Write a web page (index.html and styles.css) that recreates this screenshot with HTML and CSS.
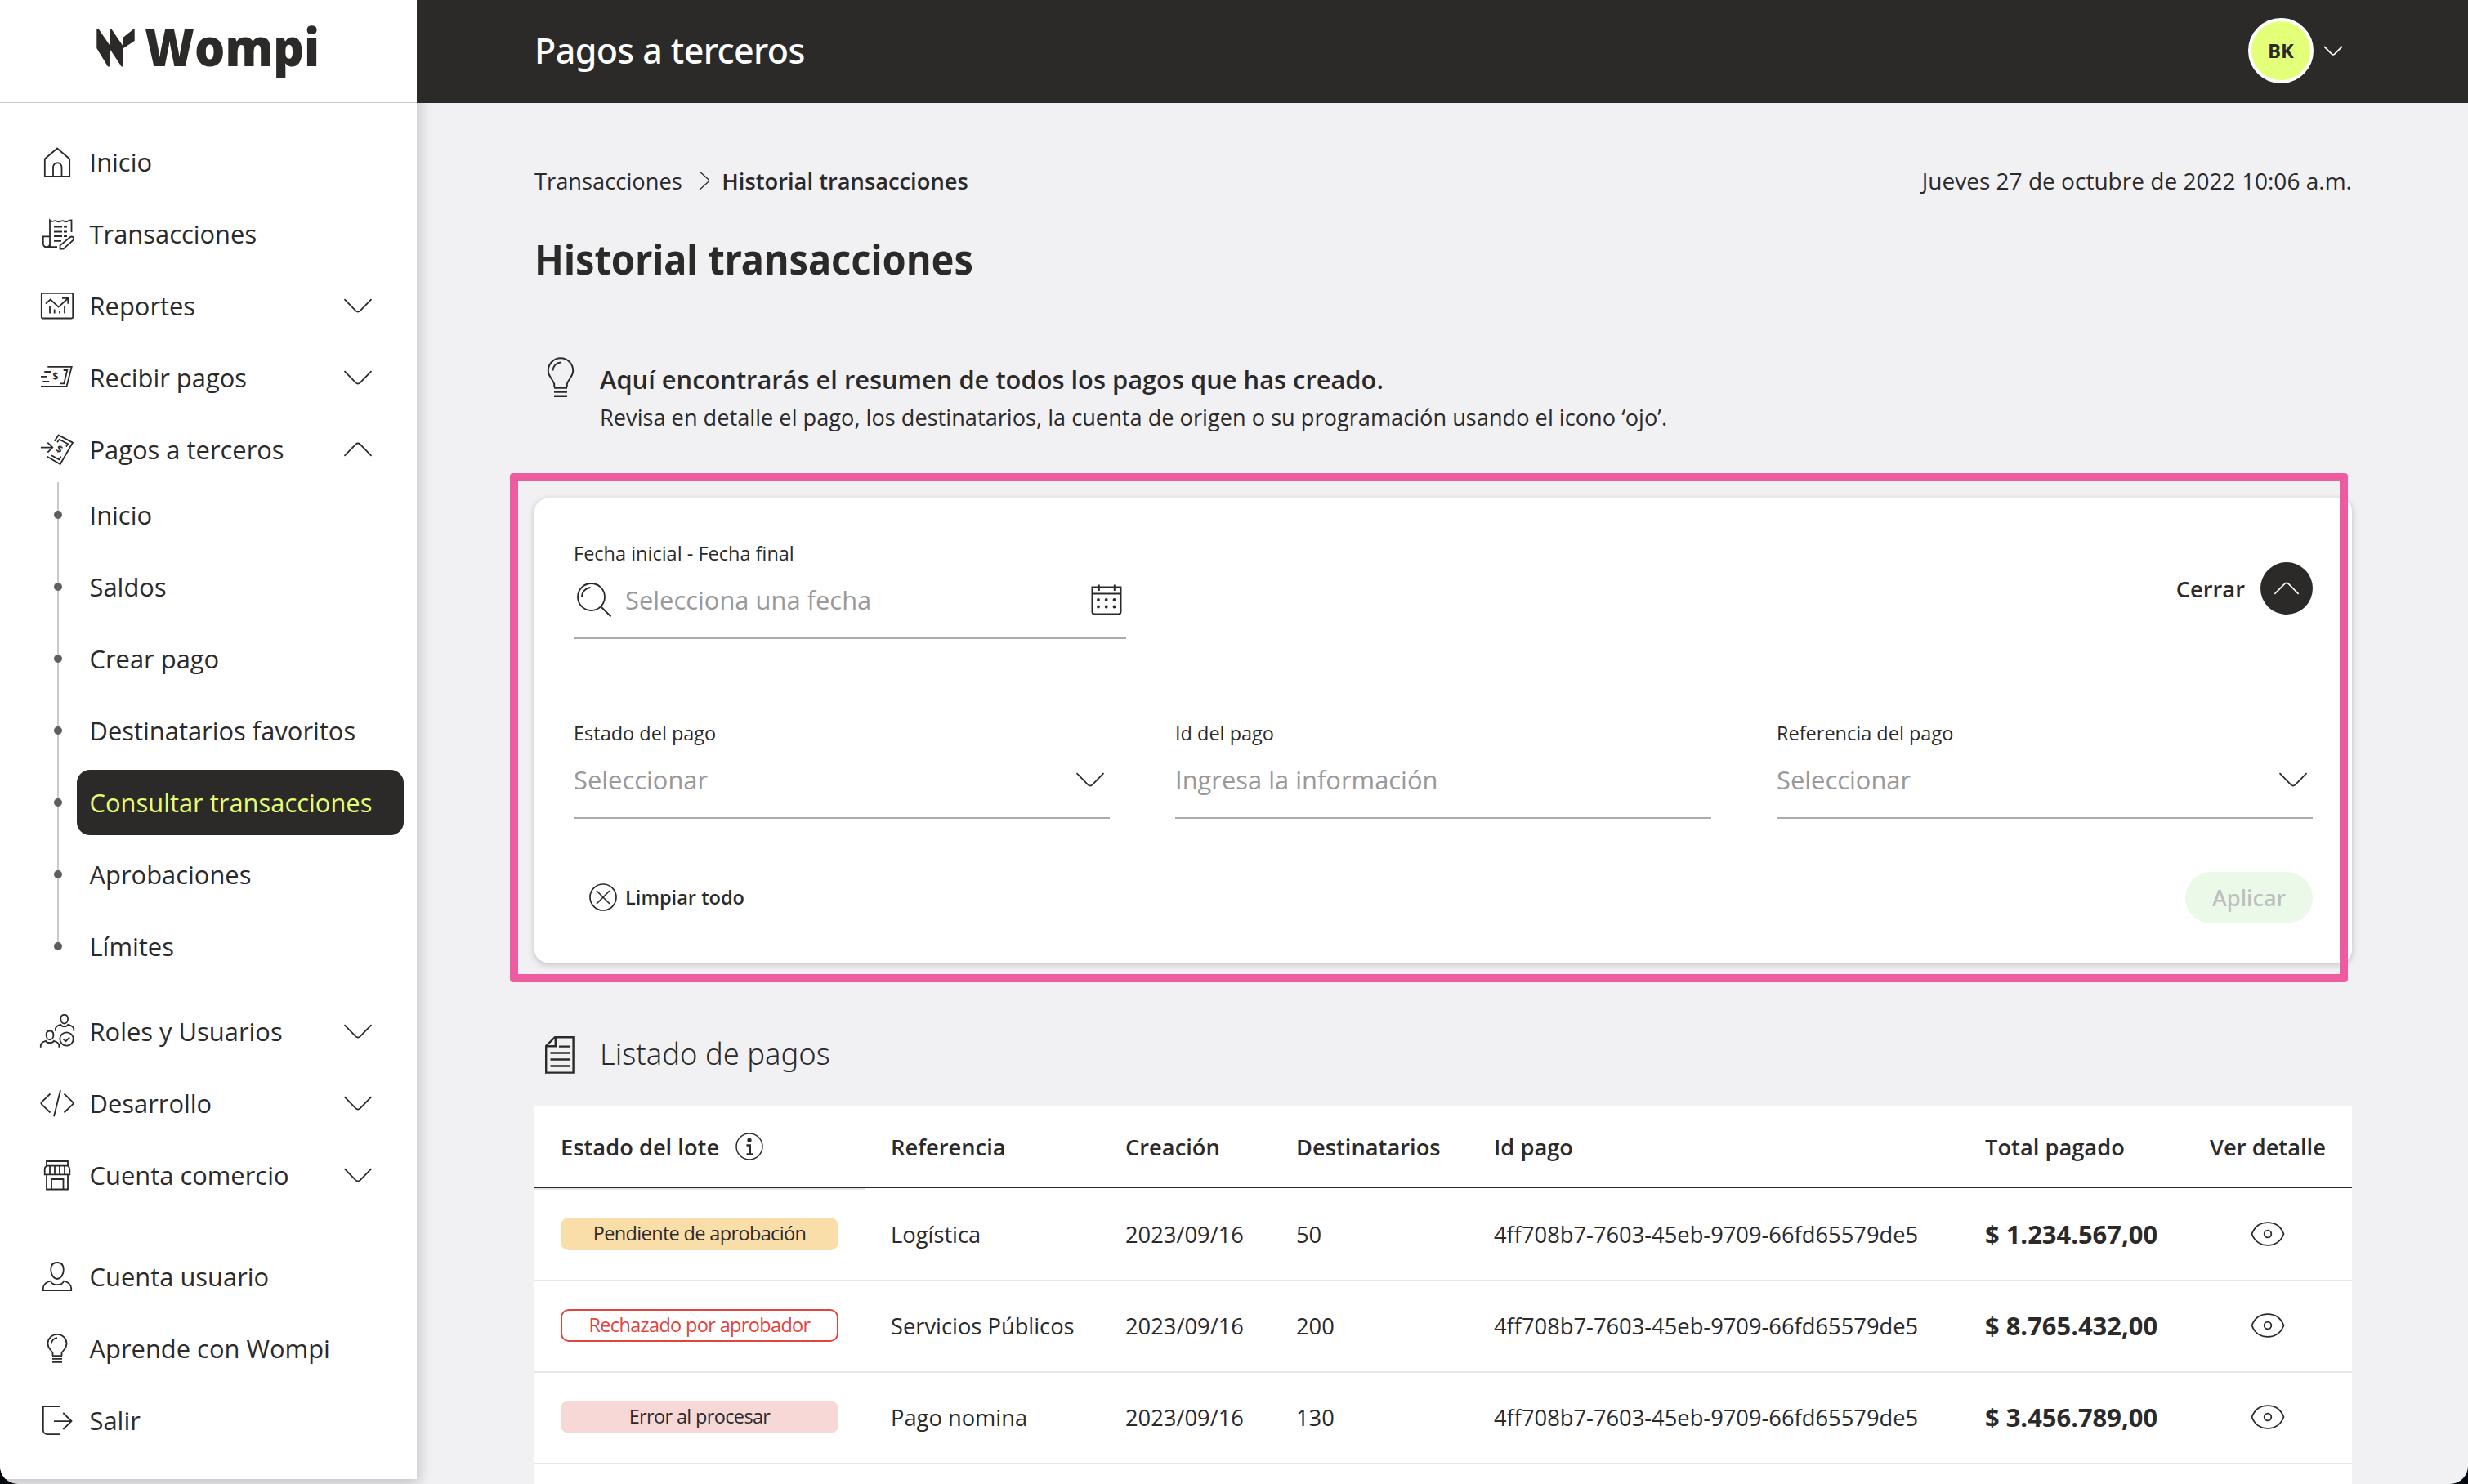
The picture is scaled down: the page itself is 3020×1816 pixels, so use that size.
FILE: index.html
```html
<!DOCTYPE html>
<html lang="es">

<head>
	<meta charset="UTF-8">
	<title>Wompi - Historial transacciones</title>
	<link rel="stylesheet" href="styles.css">
</head>

<body>
	<!-- shared icons -->
	<svg class="sprite">
		<symbol id="chevron" viewBox="0 0 36 18">
			<path d="M1.5 1.2L15.4 15.3Q18 17.6 20.6 15.3L34.5 1.2" />
		</symbol>
		<symbol id="eye" viewBox="0 0 42 30">
			<path d="M1.5 15C5 6 12 1.2 21 1.2S37 6 40.5 15C37 24 30 28.8 21 28.8S5 24 1.5 15Z" />
			<ellipse cx="21" cy="15" rx="4.3" ry="4.3" />
		</symbol>
		<symbol id="bulb" viewBox="0 0 48 48">
			<path d="M18.5 33v-3.5C17 26 12.5 24.500 12.500 18.300a11.500 11.500 0 0 1 23 0C35.500 24.500 31 26 29.500 29.500V33" />
			<path d="M17 18.500a7.200 7.200 0 0 1 7-7.300M18 33.200h12M18 36.900h12M18 40.800h12" />
		</symbol>
	</svg>

	<div class="app">
		<aside class="sidebar">
			<div class="logo">
				<svg width="276" height="68" viewBox="0 0 276 68">
					<path d="M0.300 7.500h2.400L16 27V7.500h2.400L33 29v24.500h-2.400L16.400 32V53.500H14L0.300 31ZM33 17.500L45.500 7.500H46.700V22L33 31Z" />
					<text x="59" y="52.500" textLength="214" lengthAdjust="spacingAndGlyphs">Wompi</text>
				</svg>
			</div>

			<nav class="nav">
				<a class="nav-item">
					<svg class="icon" viewBox="0 0 48 48"><path d="M24 7.500L8.800 20.500V42H39.200V20.500ZM19 42V30.500a5 5 0 0 1 10.500 0V42" /></svg>
					<span>Inicio</span>
				</a>
				<a class="nav-item">
					<svg class="icon" viewBox="0 0 48 48"><path d="M10 40.200H24M15 40V7.500q2 2 4.500 1t4.300.300t4.400 0t4.400 0t4.200 0t4.700-1.300V22M6.800 27.300H15V36q0 4-4 4.200T6.800 36ZM20 15.600h10M20 21.500h10M20 27h10M20 32.800h9M32 15.600h4M32 21.500h4M32 27h4M27.500 42.700V38.300L40 28q2-1.200 3.500.300t.200 3.400L31.500 42.700Z" /></svg>
					<span>Transacciones</span>
				</a>
				<a class="nav-item">
					<svg class="icon" viewBox="0 0 48 48"><rect x="4.800" y="8.800" width="38.400" height="30.700" rx="1.500" /><path d="M10 21.700L15.700 16.500L25.700 25.600L37.300 15M30 14.800H37.300V21.700M15 24.500v9M20.700 28.500v5M27 30.500v3M33 24.500v9" /></svg>
					<span>Reportes</span>
					<svg class="chevron"><use href="#chevron" /></svg>
				</a>
				<a class="nav-item">
					<svg class="icon" viewBox="0 0 48 48"><path d="M12.300 10.800H41.700L35.500 35H4M8.300 17h8M4 22.800h8M6.300 29h8M31.700 15H36.300L32.300 31.400H28" /><text class="money" x="18.500" y="27">$</text></svg>
					<span>Recibir pagos</span>
					<svg class="chevron"><use href="#chevron" /></svg>
				</a>
				<a class="nav-item">
					<svg class="icon" viewBox="0 0 48 48"><path d="M4 21.600H18.300M12.300 15.700L18.300 21.600L12.300 27.600M20.700 13.700L25.700 6.500L43 15.700L27.700 42L11.700 32.700M24 15.200L26.500 11.800L37.200 17.300L35 20.500M17 31.300L26.300 36.300L28.600 32.500" /><text class="money" x="23.500" y="28" transform="rotate(28 27 23.600)">$</text></svg>
					<span>Pagos a terceros</span>
					<svg class="chevron up"><use href="#chevron" /></svg>
				</a>
				<div class="submenu">
					<a class="sub-item"><span>Inicio</span></a>
					<a class="sub-item"><span>Saldos</span></a>
					<a class="sub-item"><span>Crear pago</span></a>
					<a class="sub-item"><span>Destinatarios favoritos</span></a>
					<a class="sub-item active"><span>Consultar transacciones</span></a>
					<a class="sub-item"><span>Aprobaciones</span></a>
					<a class="sub-item"><span>Límites</span></a>
				</div>
				<a class="nav-item">
					<svg class="icon" viewBox="0 0 48 48"><path d="M32.700 3.800c3 0 4.400 2 4.400 5s-1.700 5.800-4.400 5.800s-4.400-2.800-4.400-5.800s1.400-5 4.400-5ZM21.800 23.700V21c.5-3 3-4.300 6.300-5.200c1.200 3 8 3 9.200 0c3.300.900 6.400 2.200 7 5.200v2.700M15 23.500c3 0 4.400 2 4.400 5s-1.700 5.800-4.400 5.800s-4.400-2.800-4.400-5.800s1.400-5 4.400-5ZM3.800 43.800V41c.5-3 3-4.300 6.300-5.200c1.200 3 8.600 3 9.800 0c3.300.900 5.800 2.200 6.400 5.200v2.800M31.500 33.500l3 2.700l4.700-4.800" /><circle cx="35.500" cy="33.500" r="8.200" /></svg>
					<span>Roles y Usuarios</span>
					<svg class="chevron"><use href="#chevron" /></svg>
				</a>
				<a class="nav-item">
					<svg class="icon" viewBox="0 0 48 48"><path d="M15.500 12.500L5 22.700q-1.300 1.300 0 2.600L15.500 35.500M28 8L20 40.200M32.500 12.500L43 22.700q1.300 1.300 0 2.600L32.500 35.500" /></svg>
					<span>Desarrollo</span>
					<svg class="chevron"><use href="#chevron" /></svg>
				</a>
				<a class="nav-item">
					<svg class="icon" viewBox="0 0 48 48"><path d="M11 12.700V7H37V12.700M11 12.700H37Q39.300 14 39.300 17V23.300H8.700V17Q8.700 14 11 12.700ZM15 12.700V22.500M21 12.700V22.500M27 12.700V22.500M33 12.700V22.500M11 23.300V41.500H37V23.300M17 41.500V29H31.500V41.500" /></svg>
					<span>Cuenta comercio</span>
					<svg class="chevron"><use href="#chevron" /></svg>
				</a>
			</nav>

			<nav class="nav nav-bottom">
				<a class="nav-item">
					<svg class="icon" viewBox="0 0 48 48"><path d="M24 7c5.500 0 7.800 3 7.800 8.500S28.800 27 24 27s-7.800-6-7.800-11.500S18.500 7 24 7ZM6.800 41.200V38.500C7.500 33 11.500 30.500 16 29.700C18 35.500 30 35.500 32 29.700C36.500 30.500 40.500 33 41.200 38.500V41.200Z" /></svg>
					<span>Cuenta usuario</span>
				</a>
				<a class="nav-item">
					<svg class="icon"><use href="#bulb" /></svg>
					<span>Aprende con Wompi</span>
				</a>
				<a class="nav-item">
					<svg class="icon" viewBox="0 0 48 48"><path d="M28 7.200H6.800V35.500q0 5.600 5.600 5.600H28M20 25.100H41.500M31.300 15L41.500 25.100L31.300 35" /></svg>
					<span>Salir</span>
				</a>
			</nav>
		</aside>

		<div class="page">
			<header class="topbar">
				<div class="topbar-title">Pagos a terceros</div>
				<div class="account">
					<span class="avatar">BK</span>
					<svg class="chevron small"><use href="#chevron" /></svg>
				</div>
			</header>

			<main class="content">
				<div class="crumbs">
					<span>Transacciones</span>
					<svg class="crumb-arrow" viewBox="0 0 14 24"><path d="M1 .800L12 10.800Q13 12 12 13.200L1 23.200" /></svg>
					<b>Historial transacciones</b>
					<span class="date">Jueves 27 de octubre de 2022 10:06 a.m.</span>
				</div>

				<h1><span>Historial transacciones</span></h1>

				<div class="tip">
					<svg class="tip-icon" viewBox="0 0 34 50"><path d="M9.200 37v-4C8 27.500 1.800 24 1.800 16.500a15.200 15.200 0 0 1 30.400 0C32.200 24 26 27.500 24.800 33v4M7.500 16.500a10 10 0 0 1 9.500-10" /><path class="thick" d="M9 37.500h16M9 42.500h16M9 47.800h16" /></svg>
					<div>
						<p class="tip-title">Aquí encontrarás el resumen de todos los pagos que has creado.</p>
						<p class="tip-text">Revisa en detalle el pago, los destinatarios, la cuenta de origen o su programación usando el icono ‘ojo’.</p>
					</div>
				</div>

				<section class="filters">
					<div class="filters-top">
						<div class="field date-field">
							<label>Fecha inicial - Fecha final</label>
							<div class="control">
								<svg class="search-icon" viewBox="0 0 44 44"><circle cx="18.500" cy="18.500" r="16.500" /><path d="M7 18.500a11.500 11.500 0 0 1 10.500-11.500M30.500 30.500L42.500 42.500" /></svg>
								<span>Selecciona una fecha</span>
								<svg class="calendar-icon" viewBox="0 0 38 38">
									<path d="M1.500 3.500H36.500V33.500q0 3-3 3H4.500q-3 0-3-3ZM1.500 11.500H36.500M9.800 0.500V8M28.800 0.500V8" />
									<path class="dots" d="M9 19h.01M18.700 19h.01M28.500 19h.01M9 27.500h.01M18.700 27.500h.01M28.500 27.500h.01" />
								</svg>
							</div>
						</div>
						<div class="close">
							<span>Cerrar</span>
							<i class="close-button"><svg class="chevron up"><use href="#chevron" /></svg></i>
						</div>
					</div>

					<div class="filters-row">
						<div class="field">
							<label>Estado del pago</label>
							<div class="control">
								<span>Seleccionar</span>
								<svg class="chevron"><use href="#chevron" /></svg>
							</div>
						</div>
						<div class="field">
							<label>Id del pago</label>
							<div class="control">
								<span>Ingresa la información</span>
							</div>
						</div>
						<div class="field">
							<label>Referencia del pago</label>
							<div class="control">
								<span>Seleccionar</span>
								<svg class="chevron"><use href="#chevron" /></svg>
							</div>
						</div>
					</div>

					<div class="filters-footer">
						<div class="clear">
							<svg class="clear-icon" viewBox="0 0 34 34"><circle cx="17" cy="17" r="16" /><path d="M9 9L25 25M25 9L9 25" /></svg>
							<span>Limpiar todo</span>
						</div>
						<div class="apply">Aplicar</div>
					</div>
					<div class="highlight"></div>
				</section>

				<div class="list-title">
					<svg class="doc-icon" viewBox="0 0 36 46"><path class="thick" d="M12 1.200H34.600V44.600H1.200V12ZM12.800 1.500V12.300H1.500M17 12.600H30M6.500 20.500H30M6.500 28.500H30M6.500 36.500H30" /></svg>
					<h2>Listado de pagos</h2>
				</div>

				<div class="table">
					<div class="row head">
						<div>Estado del lote
							<svg class="info-icon" viewBox="0 0 34 34"><circle cx="17" cy="17" r="16" /><circle class="fill" cx="17" cy="9.200" r="2.600" /><path class="thick" d="M13.500 15.500H17.800V26M13.500 26.500H21" /></svg>
						</div>
						<div>Referencia</div>
						<div>Creación</div>
						<div>Destinatarios</div>
						<div>Id pago</div>
						<div>Total pagado</div>
						<div class="center">Ver detalle</div>
					</div>
					<div class="head-line"></div>
					<div class="row">
						<div><span class="badge pending">Pendiente de aprobación</span></div>
						<div>Logística</div>
						<div>2023/09/16</div>
						<div>50</div>
						<div>4ff708b7-7603-45eb-9709-66fd65579de5</div>
						<div class="amount">$ 1.234.567,00</div>
						<div class="center"><svg class="eye"><use href="#eye" /></svg></div>
					</div>
					<div class="row">
						<div><span class="badge rejected">Rechazado por aprobador</span></div>
						<div>Servicios Públicos</div>
						<div>2023/09/16</div>
						<div>200</div>
						<div>4ff708b7-7603-45eb-9709-66fd65579de5</div>
						<div class="amount">$ 8.765.432,00</div>
						<div class="center"><svg class="eye"><use href="#eye" /></svg></div>
					</div>
					<div class="row">
						<div><span class="badge error">Error al procesar</span></div>
						<div>Pago nomina</div>
						<div>2023/09/16</div>
						<div>130</div>
						<div>4ff708b7-7603-45eb-9709-66fd65579de5</div>
						<div class="amount">$ 3.456.789,00</div>
						<div class="center"><svg class="eye"><use href="#eye" /></svg></div>
					</div>
				</div>
			</main>
		</div>
	</div>
</body>

</html>
```
FILE: styles.css
```css
* {
	box-sizing: border-box;
}

body {
	margin: 0;
	height: 1816px;
	overflow: hidden;
	background: #02060e;
	color: #2c2a29;
	font-family: "Open Sans", "Noto Sans", sans-serif;
	font-size: 27.3px;
}

h1, h2, p {
	margin: 0;
}

svg {
	flex: none;
	fill: none;
	stroke: #2c2a29;
	stroke-width: 1.8px;
}

.sprite {
	display: none;
}

.app {
	display: flex;
	height: 1816px;
	overflow: hidden;
	border-radius: 0 0 22px 22px;
	background: #f1f1f4;
}

/* sidebar */
.sidebar {
	width: 510px;
	height: 1810px;
	flex: none;
	background: #fff;
	box-shadow: 2px 4px 16px rgba(0, 0, 0, 0.22);
	font-size: 30.9px;
}

.logo {
	display: flex;
	height: 126px;
	padding: 28px 0 0 118px;
	border-bottom: 1px solid #cbcbcb;
}

.logo svg {
	fill: #2c2a29;
	stroke: none;
}

.logo text {
	font-size: 64px;
	font-weight: 800;
}

.nav {
	display: flex;
	flex-direction: column;
	gap: 8px;
	padding: 32px 0 28px;
}

.nav-bottom {
	padding: 15px 0 0;
	border-top: 1px solid #8f8f8f;
}

.nav-item {
	display: flex;
	align-items: center;
	height: 80px;
	padding: 0 54px 0 46px;
}

.nav-item > span {
	margin-left: 15.5px;
}

.icon {
	width: 48px;
	height: 48px;
}

.money {
	font-size: 12px;
	font-weight: 700;
	fill: #2c2a29;
	stroke: none;
}

.chevron {
	width: 36px;
	height: 18px;
	margin-left: auto;
}

.up {
	transform: scaleY(-1);
}

.submenu {
	display: flex;
	flex-direction: column;
	gap: 8px;
	margin: -8px 0 16px 70px;
	/* the line stops at the last dot */
	background: linear-gradient(#c9c9c9, #c9c9c9) no-repeat 0 0 / 2px 568px;
}

.sub-item {
	display: flex;
	align-items: center;
	height: 80px;
}

.sub-item::before {
	content: "";
	width: 10px;
	height: 10px;
	margin: 0 18px 0 -4px;
	border-radius: 50%;
	background: #5e5e5e;
}

.sub-item span {
	width: 400px;
	padding-left: 15.5px;
	line-height: 80px;
	border-radius: 16px;
}

.active span {
	background: #2c2a29;
	color: #e2fd76;
}

/* top bar */
.page {
	flex: 1;
}

.topbar {
	position: relative;
	display: flex;
	align-items: center;
	justify-content: space-between;
	height: 126px;
	padding: 0 153px 3px 144px;
	background: #2c2a29;
}

.topbar-title {
	color: #fff;
	font-family: "Noto Sans", sans-serif;
	font-size: 43px;
	font-weight: 500;
	letter-spacing: -0.6px;
}

.account {
	display: flex;
	align-items: center;
	gap: 12px;
}

.avatar {
	width: 80px;
	height: 80px;
	border: 4px solid #fff;
	border-radius: 50%;
	background: #e4ff78;
	font-size: 23.8px;
	font-weight: 700;
	line-height: 72px;
	text-align: center;
}

.small {
	width: 24px;
	height: 12px;
	stroke: #fff;
	stroke-width: 2.6px;
}

.content {
	width: 2368px;
	padding: 71px 0 0 144px;
}

.crumbs {
	display: flex;
	align-items: center;
	height: 48px;
}

.crumbs b {
	font-weight: 600;
}

.crumb-arrow {
	width: 14px;
	height: 24px;
	margin: 0 14.5px 0 20px;
	stroke-width: 1.3px;
}

.date {
	margin-left: auto;
	font-size: 28.06px;
}

h1 {
	margin-top: 36px;
	font-family: "Noto Sans", sans-serif;
	font-size: 51px;
	font-weight: 700;
	line-height: 70px;
	white-space: nowrap;
}

h1 span {
	display: inline-block;
	transform: scaleX(0.92);
	transform-origin: left;
}

.tip {
	display: flex;
	gap: 31px;
	margin-top: 86px;
	padding-left: 15px;
}

.tip-icon {
	width: 34px;
	height: 50px;
	stroke-width: 2px;
}

.thick {
	stroke-width: 2.4px;
}

.tip-title {
	margin-top: 3px;
	font-size: 30.85px;
	font-weight: 600;
	line-height: 48px;
}

.tip-text {
	font-size: 27.2px;
	line-height: 46px;
}

/* filters */
.filters {
	position: relative;
	width: 2224px;
	height: 568px;
	margin-top: 76px;
	padding: 51px 48px 0;
	border-radius: 16px;
	background: #fff;
	box-shadow: 0 2px 8px rgba(0, 0, 0, 0.22);
}

.filters-top {
	display: flex;
	justify-content: space-between;
}

.field label {
	display: block;
	font-size: 23.5px;
	line-height: 32px;
}

.date-field {
	width: 676px;
}

.control {
	display: flex;
	align-items: center;
	height: 89px;
	padding: 0 6px 5px 0;
	border-bottom: 2px solid #ababab;
	color: #999;
	font-size: 30.9px;
}

.search-icon {
	width: 44px;
	height: 44px;
	margin: 0 16px 0 3px;
}

.calendar-icon {
	width: 38px;
	height: 38px;
	margin-left: auto;
	margin-right: -1px;
	stroke-width: 2px;
}

.dots {
	stroke-width: 3.8px;
	stroke-linecap: round;
}

.close {
	display: flex;
	align-items: center;
	gap: 19px;
	height: 64px;
	margin-top: 27px;
	font-weight: 600;
}

.close-button {
	display: flex;
	align-items: center;
	justify-content: center;
	width: 64px;
	height: 64px;
	border-radius: 50%;
	background: #2c2a29;
}

.close-button .chevron {
	width: 32px;
	height: 16px;
	margin: 0;
	stroke: #fff;
}

.filters-row {
	display: grid;
	grid-template-columns: repeat(3, 656px);
	column-gap: 80px;
	margin-top: 99px;
}

.filters-footer {
	display: flex;
	align-items: center;
	justify-content: space-between;
	height: 64px;
	margin-top: 64px;
}

.clear {
	display: flex;
	align-items: center;
	gap: 10px;
	padding-left: 19px;
	font-size: 23.6px;
	font-weight: 600;
}

.clear-icon {
	width: 34px;
	height: 34px;
	stroke-width: 1.7px;
}

.apply {
	width: 156px;
	border-radius: 32px;
	background: #eaf9e8;
	color: #bebebe;
	font-family: "Noto Sans", sans-serif;
	font-weight: 500;
	line-height: 63px;
	text-align: center;
}

/* marks the filter area, slightly off the card */
.highlight {
	position: absolute;
	top: -31px;
	left: -30px;
	width: 2249px;
	height: 623px;
	border: 10px solid #ef5ba1;
	border-radius: 4px;
}

/* list */
.list-title {
	display: flex;
	align-items: center;
	gap: 31px;
	height: 64px;
	margin-top: 81px;
	padding-left: 13px;
}

.doc-icon {
	width: 36px;
	height: 46px;
}

h2 {
	margin-top: -4px;
	font-family: "Noto Sans", sans-serif;
	font-size: 36.4px;
	font-weight: 300;
}

.table {
	width: 2224px;
	height: 500px;
	margin-top: 31px;
	background: #fff;
}

.row {
	display: grid;
	grid-template-columns: 404px 287px 209px 242px 601px 275px 206px;
	align-items: center;
	height: 112px;
	padding-bottom: 2px;
	border-bottom: 2px solid #e6e6e6;
}

.row > div {
	display: flex;
	align-items: center;
	padding-left: 32px;
}

.row > .center {
	justify-content: center;
	padding: 0;
}

.head {
	height: 100px;
	padding: 0;
	border-color: #2c2a29;
	font-weight: 600;
}

.head-line {
	width: 404px;
	height: 2px;
	background: #e6e6e6;
}

.info-icon {
	width: 34px;
	height: 34px;
	margin-left: 20px;
	stroke-width: 1.5px;
}

.info-icon .fill {
	fill: #2c2a29;
	stroke: none;
}

.badge {
	width: 340px;
	height: 40px;
	border-radius: 10px;
	font-size: 23.5px;
	letter-spacing: -0.65px;
	line-height: 39px;
	text-align: center;
}

.pending {
	background: #fadea9;
}

.rejected {
	border: 2px solid #e0443e;
	color: #e0443e;
	line-height: 35px;
}

.error {
	background: #f8d8d7;
}

.amount {
	font-size: 30.9px;
	font-weight: 700;
}

.eye {
	width: 42px;
	height: 30px;
}
```
